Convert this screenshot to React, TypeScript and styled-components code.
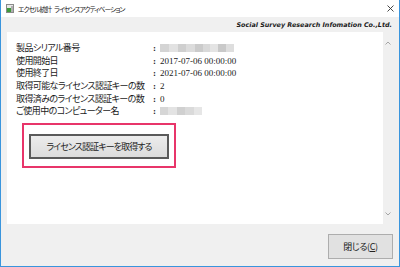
import React, { FC } from "react";
import styled, { createGlobalStyle } from "styled-components";

const GlobalStyle = createGlobalStyle`
  html, body {
    margin: 0;
    padding: 0;
    background: #ffffff;
  }
`;

const Window = styled.div`
  width: 400px;
  height: 267px;
  box-sizing: border-box;
  border: 1px solid #3a95dd;
  border-top: none;
  background: #f0f0f0;
  display: flex;
  flex-flow: column;
  font-family: "Noto Sans CJK JP", "Noto Sans", sans-serif;
  font-feature-settings: "palt" 1;
  color: #1a1a1a;
`;

const TitleBar = styled.div`
  height: 17px;
  background: #ffffff;
  display: flex;
  align-items: center;
  padding: 0 5px 0 5px;
  gap: 4px;
`;

const TitleText = styled.div`
  flex: 1;
  display: flex;
  gap: 3px;
  white-space: nowrap;
  font-size: 6.8px;
  letter-spacing: -1px;
  color: #222;
`;

const CloseX = styled.div`
  width: 8px;
  height: 8px;
  display: flex;
  align-items: center;
  justify-content: center;
`;

const CompanyBar = styled.div`
  height: 15px;
  display: flex;
  align-items: center;
  justify-content: flex-end;
  padding-right: 7px;
  font-family: "DejaVu Sans", "Liberation Sans", sans-serif;
  font-style: italic;
  font-weight: 700;
  font-size: 6.4px;
  color: #1a1a1a;
  white-space: nowrap;
`;

const Content = styled.div`
  height: 192px;
  margin: 0 6px;
  background: #ffffff;
  display: flex;
`;

const Body = styled.div`
  flex: 1;
  padding: 10px 0 0 9px;
  display: flex;
  flex-flow: column;
`;

const InfoGrid = styled.div`
  display: grid;
  grid-template-columns: 136px 8px auto;
  grid-auto-rows: 12.6px;
  align-items: center;
  font-size: 9px;
`;

const Label = styled.div`
  white-space: nowrap;
  letter-spacing: -0.6px;
  line-height: 12px;
`;

const Colon = styled.div`
  font-family: "Liberation Serif", serif;
  font-weight: 700;
  font-size: 9px;
  padding-left: 1px;
`;

const Value = styled.div`
  font-family: "Liberation Serif", serif;
  font-size: 9px;
  white-space: nowrap;
`;

const Blur = styled.div`
  display: flex;
  height: 8px;
`;

const BlurCell = styled.div<{ w: number; shade: string }>`
  width: ${({ w }) => w}px;
  height: 100%;
  background: ${({ shade }) => shade};
`;

const Highlight = styled.div`
  width: 154px;
  height: 45px;
  box-sizing: border-box;
  margin: 5px 0 0 6px;
  border: 2px solid #e8356a;
  padding: 6px 5px 0 5px;
`;

const GetKeyButton = styled.button`
  width: 140px;
  height: 25px;
  box-sizing: border-box;
  border: 2px solid #5a5a5a;
  background: linear-gradient(#ececec, #dcdcdc);
  font-family: inherit;
  font-feature-settings: "palt" 1;
  font-size: 9px;
  letter-spacing: -0.9px;
  color: #222;
  padding: 0;
`;

const Scrollbar = styled.div`
  width: 10px;
  background: #f0f0f0;
  display: flex;
  flex-flow: column;
  justify-content: space-between;
  align-items: center;
  padding: 9px 0 8px;
`;

const Footer = styled.div`
  flex: 1;
  display: flex;
  justify-content: flex-end;
  align-items: flex-start;
  padding: 10px 6px 0 0;
`;

const CloseButton = styled.button`
  width: 65px;
  height: 25px;
  box-sizing: border-box;
  border: 1px solid #adadad;
  background: #e1e1e1;
  font-family: inherit;
  font-feature-settings: "palt" 1;
  font-size: 9px;
  letter-spacing: -0.4px;
  color: #222;
  padding: 0;
`;

const Underline = styled.span`
  text-decoration: underline;
`;

const serialBlur = [
  { w: 9, shade: "#d4d4d4" },
  { w: 9, shade: "#e2e2e2" },
  { w: 8, shade: "#cfcfcf" },
  { w: 9, shade: "#dcdcdc" },
  { w: 8, shade: "#cbcbcb" },
  { w: 7, shade: "#d9d9d9" },
  { w: 8, shade: "#e4e4e4" },
  { w: 8, shade: "#c9c9c9" },
  { w: 8, shade: "#dedede" },
];

const pcBlur = [
  { w: 8, shade: "#d6d6d6" },
  { w: 9, shade: "#e3e3e3" },
  { w: 8, shade: "#d0d0d0" },
  { w: 9, shade: "#dadada" },
  { w: 8, shade: "#e6e6e6" },
];

const rows = [
  { label: "製品シリアル番号", blur: serialBlur },
  { label: "使用開始日", value: "2017-07-06 00:00:00" },
  { label: "使用終了日", value: "2021-07-06 00:00:00" },
  { label: "取得可能なライセンス認証キーの数", value: "2" },
  { label: "取得済みのライセンス認証キーの数", value: "0" },
  { label: "ご使用中のコンピューター名", blur: pcBlur },
];

const AppIcon: FC = () => (
  <svg width="8" height="9" viewBox="0 0 8 9">
    <rect x="0.5" y="0.5" width="7" height="8" fill="#e8e8e8" stroke="#8a8a8a" />
    <rect x="1" y="4" width="4" height="4" fill="#3f9b3a" />
    <rect x="5" y="2" width="2" height="6" fill="#b0b0b0" />
  </svg>
);

const Chevron: FC<{ up?: boolean }> = ({ up }) => (
  <svg width="6" height="4" viewBox="0 0 6 4">
    <path
      d={up ? "M0.5 3.5 L3 1 L5.5 3.5" : "M0.5 0.5 L3 3 L5.5 0.5"}
      fill="none"
      stroke="#a6a6a6"
      strokeWidth="1"
    />
  </svg>
);

export default function App() {
  return (
    <>
      <GlobalStyle />
      <Window>
        <TitleBar>
          <AppIcon />
          <TitleText>
            <span>エクセル統計</span>
            <span>ライセンスアクティベーション</span>
          </TitleText>
          <CloseX>
            <svg width="7" height="7" viewBox="0 0 7 7">
              <path d="M0.5 0.5 L6.5 6.5 M6.5 0.5 L0.5 6.5" stroke="#333" strokeWidth="0.9" />
            </svg>
          </CloseX>
        </TitleBar>
        <CompanyBar>Social Survey Research Infomation Co.,Ltd.</CompanyBar>
        <Content>
          <Body>
            <InfoGrid>
              {rows.map(({ label, value, blur }) => (
                <React.Fragment key={label}>
                  <Label>{label}</Label>
                  <Colon>:</Colon>
                  {blur ? (
                    <Blur>
                      {blur.map((b, i) => (
                        <BlurCell key={i} w={b.w} shade={b.shade} />
                      ))}
                    </Blur>
                  ) : (
                    <Value>{value}</Value>
                  )}
                </React.Fragment>
              ))}
            </InfoGrid>
            <Highlight>
              <GetKeyButton>ライセンス認証キーを取得する</GetKeyButton>
            </Highlight>
          </Body>
          <Scrollbar>
            <Chevron up />
            <Chevron />
          </Scrollbar>
        </Content>
        <Footer>
          <CloseButton>
            閉じる(<Underline>C</Underline>)
          </CloseButton>
        </Footer>
      </Window>
    </>
  );
}
